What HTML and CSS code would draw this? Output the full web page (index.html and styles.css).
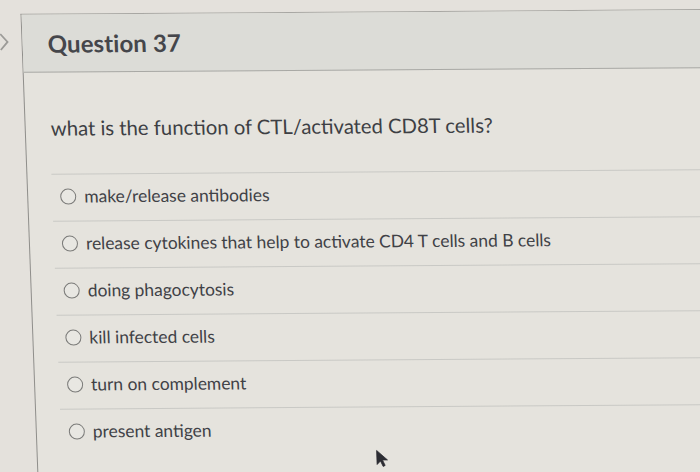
FILE: index.html
```html
<!DOCTYPE html>
<html>
<head>
<meta charset="utf-8">
<link rel="stylesheet" href="styles.css">
</head>
<body>
<div class="page">
  <div class="side">
    <svg class="chev" width="10" height="18" viewBox="0 0 10 18"><path d="M1 1 L8 9 L1 17" fill="none" stroke="#9c9b98" stroke-width="1.8"/></svg>
  </div>
  <div class="card">
    <div class="header">
      <h2 class="title">Question 37</h2>
    </div>
    <div class="content">
      <p class="question">what is the function of CTL/activated CD8T cells?</p>
      <ul class="answers">
        <li class="answer"><span class="radio"></span><span class="label">make/release antibodies</span></li>
        <li class="answer"><span class="radio"></span><span class="label">release cytokines that help to activate CD4 T cells and B cells</span></li>
        <li class="answer"><span class="radio"></span><span class="label">doing phagocytosis</span></li>
        <li class="answer"><span class="radio"></span><span class="label">kill infected cells</span></li>
        <li class="answer"><span class="radio"></span><span class="label">turn on complement</span></li>
        <li class="answer"><span class="radio"></span><span class="label">present antigen</span></li>
      </ul>
    </div>
  </div>
  <svg class="cursor" width="14" height="18" viewBox="0 0 14 18"><path d="M1 1 L1 15 L4.5 11.5 L7 17 L9 16 L6.5 10.5 L11.5 10.5 Z" fill="#2c2d33" stroke="#2c2d33" stroke-width="0.8"/></svg>
</div>
</body>
</html>
```

FILE: styles.css
```css
html, body {
  margin: 0;
  padding: 0;
  background: #e4e1dc;
  overflow: hidden;
  width: 700px;
  height: 472px;
}
.page {
  position: relative;
  display: flex;
  padding-top: 14px;
  width: 1000px;
  height: 520px;
  transform-origin: 0 0;
  transform: skew(2.1deg, -0.4deg);
  font-family: Lato, "Open Sans", sans-serif;
  color: #3b3d42;
}
.side {
  width: 20px;
  flex: none;
}
.chev {
  display: block;
  margin-top: 19px;
  margin-left: -2px;
}
.card {
  flex: 1;
  border-left: 1px solid #8f8e8b;
  border-top: 1px solid #a8a7a3;
  background: #e5e3dd;
}
.header {
  height: 57px;
  display: flex;
  align-items: center;
  padding-left: 25px;
  background: #dcdcd7;
  border-bottom: 1px solid #a9a9a5;
}
.title {
  margin: 0;
  font-size: 24px;
  font-weight: 700;
  color: #45464b;
  letter-spacing: 0.1px;
}
.content {
  padding: 42px 0 0 24px;
}
.question {
  margin: 0 0 0 1px;
  font-size: 20.3px;
  line-height: 26px;
  color: #3d3f44;
}
.answers {
  list-style: none;
  margin: 33px 0 0 0;
  padding: 0;
}
.answer {
  box-sizing: border-box;
  height: 47px;
  border-top: 1px solid #c9c9c5;
  display: flex;
  align-items: center;
  padding: 0 0 3px 8px;
}
.radio {
  width: 14px;
  height: 14px;
  border: 1.5px solid #7b7b79;
  border-radius: 50%;
  flex: none;
  background: #e8e7e2;
}
.label {
  margin-left: 8px;
  font-size: 17.4px;
  color: #404146;
}
.cursor {
  position: absolute;
  left: 359px;
  top: 452px;
}
```
